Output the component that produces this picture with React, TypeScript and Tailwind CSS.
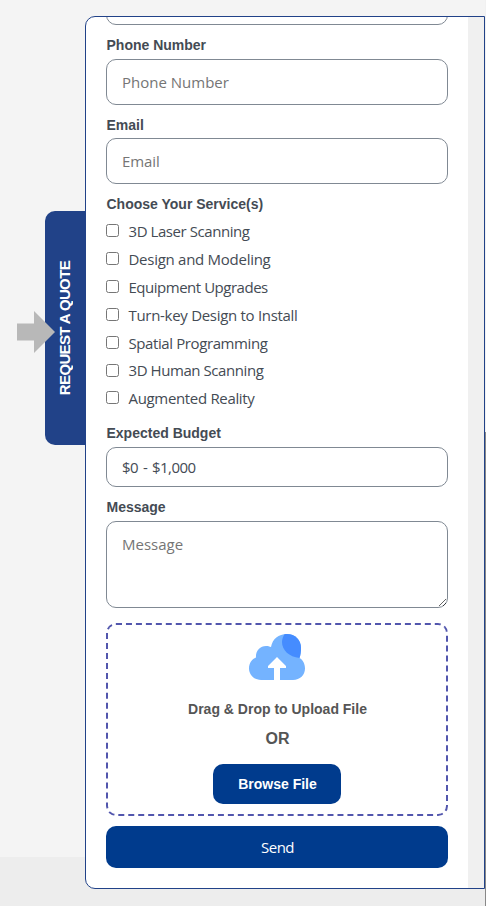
import type { ReactNode } from "react";

const services = [
  { name: "3D Laser Scanning", tracking: "tracking-[-0.430px]" },
  { name: "Design and Modeling", tracking: "tracking-[-0.270px]" },
  { name: "Equipment Upgrades", tracking: "tracking-[-0.480px]" },
  { name: "Turn-key Design to Install", tracking: "tracking-[-0.3px]" },
  { name: "Spatial Programming", tracking: "tracking-[-0.4px]" },
  { name: "3D Human Scanning", tracking: "tracking-[-0.430px]" },
  { name: "Augmented Reality", tracking: "tracking-[-0.330px]" },
];

function Label({ children }: { children: ReactNode }) {
  return (
    <div className="flex h-5 items-center pl-[0.5px] font-['Liberation_Sans',Arial,sans-serif] text-[14px] font-bold text-[#444b54]">
      <span>{children}</span>
    </div>
  );
}

function CloudIcon() {
  return (
    <svg width="56" height="46" viewBox="0 0 56 46" className="block">
      <path
        d="M12 46C5 46 0 40.500 0 34.500C0 29 3 25 7 23.500C6.500 17 11 12 17 12C19 12 20.500 12.500 22 13C23.500 5 29.500 0 38 0C46 0 52 6 52 14C52 17.500 51.500 21 50.500 24C54 26 56 30 56 34.500C56 41 51 46 44 46Z"
        fill="#74b3ff"
      />
      <path
        d="M35.500 0.200C45 -1 52 5 52 14C52 17.500 51.500 21 50.500 24C40 23 33 16 33 8C33 5 34 2.500 35.500 0.200Z"
        fill="#458cff"
      />
      <path d="M25 46V34H19V32L28 23L37 32V34H31V46Z" fill="white" />
    </svg>
  );
}

export default function App() {
  return (
    <div className="relative flex h-[906px] w-[486px] overflow-hidden bg-[linear-gradient(to_bottom,#f4f4f4_857px,#ededed_857px)] font-['Open_Sans','Noto_Sans',sans-serif] text-[#444b54]">
      <div className="flex w-[85px] shrink-0 justify-end pt-[211px]">
        <div className="flex h-[234px] w-10 items-center justify-center rounded-l-[10px] bg-[#214288]">
          <span className="rotate-180 font-['Liberation_Sans',Arial,sans-serif] text-[15px] leading-5 font-bold tracking-[-0.650px] whitespace-nowrap text-white [writing-mode:vertical-rl]">
            REQUEST A QUOTE
          </span>
        </div>
      </div>
      <svg width="38" height="42" viewBox="0 0 38 42" className="absolute top-[311px] left-[17px]">
        <path d="M0 12.500H17V0L38 21L17 42V29.500H0Z" fill="#b8b8b8" />
      </svg>

      <div className="mt-4 flex h-[873px] w-[400px] shrink-0 overflow-hidden rounded-l-[10px] border border-[#214288] bg-white">
        <form className="flex w-[382px] shrink-0 flex-col px-5">
          <div className="h-2 w-[342px] shrink-0 overflow-hidden">
            <div className="-mt-[38px] h-[46px] rounded-[10px] border border-[#808993]" />
          </div>

          <div className="mt-[10px]">
            <Label>Phone Number</Label>
          </div>
          <div className="mt-1 w-[342px]">
            <input
              className="block h-[46px] w-full rounded-[10px] border border-[#808993] px-[15px] text-[15px] placeholder:text-[#757575]"
              placeholder="Phone Number"
            />
          </div>

          <div className="mt-[10px]">
            <Label>Email</Label>
          </div>
          <input
            className="mt-[3px] block h-[46px] w-[342px] rounded-[10px] border border-[#808993] px-[15px] text-[15px] tracking-[-0.1px] placeholder:text-[#757575]"
            placeholder="Email"
          />

          <div className="mt-[10px]">
            <Label>Choose Your Service(s)</Label>
          </div>
          <div className="mt-[3px] flex h-[195px] shrink-0 flex-col">
            {services.map((s) => (
              <label key={s.name} className="flex h-[27.830px] shrink-0 items-center gap-[9.500px]">
                <input
                  type="checkbox"
                  className="size-[13px] shrink-0 appearance-none rounded-[2.500px] border border-[#767676] bg-white"
                />
                <span className={`pt-[0.6px] text-[15px] leading-5 whitespace-nowrap ${s.tracking}`}>{s.name}</span>
              </label>
            ))}
          </div>

          <div className="mt-[11px]">
            <Label>Expected Budget</Label>
          </div>
          <select className="mt-1 block h-10 w-[342px] shrink-0 appearance-none rounded-[10px] border border-[#808993] bg-white px-[15px] text-[15px] tracking-[-0.550px] [word-spacing:1.5px]">
            <option>$0 - $1,000</option>
          </select>

          <div className="mt-[10px]">
            <Label>Message</Label>
          </div>
          <textarea
            className="mt-1 block h-[87px] w-[342px] shrink-0 resize rounded-[10px] border border-[#808993] px-[15px] py-[10px] text-[15px] leading-6 placeholder:text-[#757575]"
            placeholder="Message"
          />

          <div className="mt-[15px] flex h-[193px] w-[342px] shrink-0 flex-col items-center rounded-[10px] border-2 border-dashed border-[#5256ad] pt-[9px] font-['Liberation_Sans',Arial,sans-serif] text-[#555]">
            <CloudIcon />
            <div className="mt-[19px] pl-px text-[14px] leading-5 font-bold">Drag &amp; Drop to Upload File</div>
            <div className="mt-[10px] pl-px text-[16px] leading-5 font-bold">OR</div>
            <button
              type="button"
              className="mt-[15px] h-10 w-32 rounded-[10px] bg-[#003b8d] pt-px pl-px text-[14px] font-bold text-white"
            >
              Browse File
            </button>
          </div>

          <button
            type="button"
            className="mt-[10px] h-[42px] w-[342px] shrink-0 rounded-[10px] bg-[#003b8d] pl-px text-[15px] tracking-[-0.5px] text-white"
          >
            Send
          </button>
        </form>
        <div className="w-4 shrink-0 bg-[#f0f0f0]" />
      </div>
      <div className="flex w-px shrink-0 flex-col">
        <div className="h-[432px] bg-[#f1f1f1]" />
        <div className="flex-1 bg-[#888]" />
      </div>
    </div>
  );
}
